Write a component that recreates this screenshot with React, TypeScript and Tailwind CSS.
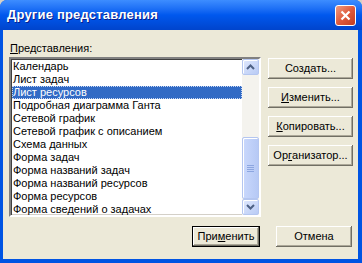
import React from 'react';

const items = [
  'Календарь',
  'Лист задач',
  'Лист ресурсов',
  'Подробная диаграмма Ганта',
  'Сетевой график',
  'Сетевой график с описанием',
  'Схема данных',
  'Форма задач',
  'Форма названий задач',
  'Форма названий ресурсов',
  'Форма ресурсов',
  'Форма сведений о задачах',
];

function Button({
  children,
  className,
  isDefault,
}: {
  children: React.ReactNode;
  className: string;
  isDefault?: boolean;
}) {
  return (
    <div
      className={
        'flex h-[21px] items-center justify-center bg-[#ece9d8] text-[11px] leading-none text-black ' +
        (isDefault
          ? 'border border-black shadow-[inset_-1px_-1px_#716f64,inset_1px_1px_#fff,inset_-2px_-2px_#aca899] '
          : 'shadow-[inset_-1px_-1px_#716f64,inset_1px_1px_#fff,inset_-2px_-2px_#aca899] ') +
        className
      }
    >
      {children}
    </div>
  );
}

function Chevron({ up }: { up?: boolean }) {
  return (
    <svg width="9" height="6" viewBox="0 0 9 6">
      <path
        d={up ? 'M1 5 L4.5 1.5 L8 5' : 'M1 1 L4.5 4.5 L8 1'}
        fill="none"
        stroke="#4d6185"
        strokeWidth="2"
      />
    </svg>
  );
}

function ScrollButton({ up }: { up?: boolean }) {
  return (
    <div className="flex h-[17px] w-[17px] items-center justify-center rounded-[2px] border border-[#b4c6f0] bg-gradient-to-br from-[#dfe8fd] to-[#b9cbf5] shadow-[inset_1px_1px_#fff]">
      <Chevron up={up} />
    </div>
  );
}

export default function App() {
  return (
    <div className="h-[263px] w-[362px] bg-[#d4d0c8] font-['Tahoma','Liberation_Sans',sans-serif]">
      <div className="flex h-full w-full flex-col overflow-hidden rounded-t-[7px] bg-[#0054e3]">
        {/* Заголовок окна */}
        <div className="flex h-[30px] items-center justify-between bg-gradient-to-b from-[#3d8dff] via-[#0058ee] to-[#0044cc] pl-[7px] pr-[6px]">
          <span className="text-[13px] font-bold tracking-[0.2px] text-white [font-family:'Liberation_Sans',sans-serif] [text-shadow:1px_1px_0_#0a1e8c]">
            Другие представления
          </span>
          <div className="flex h-[21px] w-[21px] items-center justify-center rounded-[3px] border border-white bg-gradient-to-br from-[#ee9a80] via-[#df5a3c] to-[#c23d1f]">
            <svg width="11" height="11" viewBox="0 0 11 11">
              <path d="M1.5 1.5 L9.5 9.5 M9.5 1.5 L1.5 9.5" stroke="#fff" strokeWidth="2.2" />
            </svg>
          </div>
        </div>

        {/* Клиентская область */}
        <div className="mx-[3px] mb-[4px] mr-[4px] flex flex-1 flex-col bg-[#ece9d8] pl-[6px] pr-[5px]">
          <div className="mt-[12px] h-[13px] pl-[1px] text-[11px] leading-[13px] text-black">
            <u>П</u>редставления:
          </div>

          <div className="mt-[2px] flex">
            <div className="flex h-[160px] w-[252px] border-2 border-b-white border-l-[#808080] border-r-white border-t-[#808080] shadow-[inset_1px_1px_#404040,inset_-1px_-1px_#d4d0c8] bg-white">
              <div className="flex-1 pl-[1px] pt-[1px]">
                {items.map((it, i) => (
                  <div
                    key={it}
                    className={
                      'h-[13px] whitespace-nowrap pl-[1px] text-[11px] leading-[13px] ' +
                      (i === 2
                        ? 'bg-[#316ac5] text-white outline outline-1 outline-offset-[-1px] outline-dotted outline-[#c9d8f4]'
                        : 'text-black')
                    }
                  >
                    {it}
                  </div>
                ))}
              </div>
              <div className="flex w-[17px] flex-col bg-[#f4f3ee]">
                <ScrollButton up />
                <div className="flex-1 pt-[62px]">
                  <div className="flex h-[62px] w-[17px] flex-col items-center justify-center gap-[1px] rounded-[2px] border border-[#b4c6f0] bg-gradient-to-r from-[#c9d8fc] to-[#b6c9f5] shadow-[inset_1px_1px_#fff]">
                    {[0, 1, 2, 3].map((n) => (
                      <div key={n} className="h-[1px] w-[7px] bg-[#8ca6e0]" />
                    ))}
                  </div>
                </div>
                <ScrollButton />
              </div>
            </div>

            <div className="ml-[7px] flex flex-col gap-[8px] pt-[1px]">
              <Button className="w-[85px]">
                Соз<u>д</u>ать...
              </Button>
              <Button className="w-[85px]">
                <u>И</u>зменить...
              </Button>
              <Button className="w-[85px]">
                <u>К</u>опировать...
              </Button>
              <Button className="w-[85px]">
                Ор<u>г</u>анизатор...
              </Button>
            </div>
          </div>

          <div className="mt-[9px] flex justify-end gap-[16px] pr-[1px]">
            <Button className="w-[68px]" isDefault>
              При<u>м</u>енить
            </Button>
            <Button className="w-[76px]">Отмена</Button>
          </div>
        </div>
      </div>
    </div>
  );
}
